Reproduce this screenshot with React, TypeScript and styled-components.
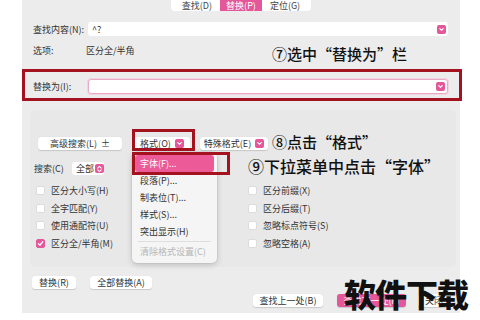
import React from "react";
import styled, { createGlobalStyle } from "styled-components";

const GlobalStyle = createGlobalStyle`
  html, body {
    margin: 0;
    padding: 0;
    background: #ffffff;
  }
  body {
    font-family: "Noto Sans CJK SC", "Noto Sans", sans-serif;
  }
`;

const PINK = "#e4579a";
const RED = "#a3121e";

const Page = styled.div`
  position: relative;
  width: 480px;
  height: 320px;
  overflow: hidden;
  background: #fff;
`;

const Dialog = styled.div`
  margin-left: 22px;
  width: 438px;
  height: 313px;
  background: #ececec;
  display: flex;
  flex-direction: column;
  font-size: 9px;
  color: #333;
`;

const TabBar = styled.div`
  align-self: center;
  display: flex;
  height: 11px;
  padding: 0 4px;
  background: #fff;
  border-radius: 0 0 4px 4px;
`;

const Tab = styled.div<{ $active?: boolean }>`
  padding: 0 6px;
  margin: 0 1px;
  height: 11px;
  line-height: 11px;
  font-size: 9px;
  color: ${(p) => (p.$active ? "#fff" : "#444")};
  background: ${(p) => (p.$active ? PINK : "transparent")};
`;

const Row = styled.div<{ $mt: number; $h: number }>`
  display: flex;
  align-items: center;
  margin-top: ${(p) => p.$mt}px;
  height: ${(p) => p.$h}px;
  padding: 0 12px 0 11px;
`;

const Label = styled.div<{ $w: number }>`
  width: ${(p) => p.$w}px;
  flex: none;
  white-space: nowrap;
`;

const Field = styled.div<{ $focus?: boolean }>`
  flex: 1;
  position: relative;
  height: ${(p) => (p.$focus ? 15 : 14)}px;
  box-sizing: border-box;
  background: #fff;
  border-radius: 3px;
  border: ${(p) => (p.$focus ? "1px solid #e9a9c6" : "none")};
  box-shadow: ${(p) => (p.$focus ? "0 0 0 1px #f3d3e2" : "none")};
  display: flex;
  align-items: center;
  padding-left: 4px;
`;

const PinkIcon = styled.span`
  width: 9px;
  height: 9px;
  border-radius: 2px;
  background: ${PINK};
  display: inline-flex;
  align-items: center;
  justify-content: center;
  flex: none;
`;

const FieldIcon = styled(PinkIcon)`
  position: absolute;
  right: 2px;
  top: 50%;
  margin-top: -4.5px;
`;

const Note = styled.div<{ $size?: number; $ml?: number }>`
  font-size: ${(p) => p.$size ?? 15}px;
  line-height: ${(p) => (p.$size ?? 15) + 2}px;
  margin-left: ${(p) => p.$ml ?? 0}px;
  font-weight: 500;
  color: #111;
  white-space: nowrap;
`;

const OptionRow = styled.div`
  display: flex;
  align-items: flex-start;
  height: 17px;
  margin-top: 9px;
  padding-left: 11px;
`;

const OptionText = styled.div<{ $w: number }>`
  width: ${(p) => p.$w}px;
  line-height: 12px;
  flex: none;
`;

const RedFrame = styled.div`
  margin-top: 7px;
  width: 440px;
  height: 32px;
  box-sizing: border-box;
  border: 3px solid ${RED};
  display: flex;
  align-items: center;
  padding: 2px 11px 0 8px;
`;

const Group = styled.div`
  margin: 9px 0 0 8px;
  width: 426px;
  height: 157px;
  background: #e8e8e8;
  border-radius: 5px;
  display: flex;
  flex-direction: column;
`;

const ButtonRow = styled.div`
  display: flex;
  align-items: flex-end;
  height: 21px;
  margin-top: 19px;
  padding-left: 8px;
`;

const Button = styled.div<{ $w: number; $ml?: number; $pink?: boolean }>`
  width: ${(p) => p.$w}px;
  margin-left: ${(p) => p.$ml ?? 0}px;
  height: 13px;
  box-sizing: border-box;
  border-radius: 3px;
  background: ${(p) => (p.$pink ? PINK : "#fff")};
  color: ${(p) => (p.$pink ? "#fff" : "#333")};
  box-shadow: 0 0.5px 1px rgba(0, 0, 0, 0.15);
  display: flex;
  align-items: center;
  justify-content: center;
  gap: 4px;
  font-size: 9px;
  line-height: 13px;
  white-space: nowrap;
  flex: none;
`;

const SearchRow = styled.div`
  display: flex;
  align-items: flex-end;
  height: 18px;
  margin-top: 7px;
  padding-left: 4px;
`;

const Select = styled.div`
  width: 32px;
  height: 13px;
  margin-left: 6px;
  box-sizing: border-box;
  background: #fff;
  border-radius: 3px;
  display: flex;
  align-items: center;
  justify-content: space-between;
  padding: 0 0 0 4px;
  white-space: nowrap;
  flex: none;
`;

const Checks = styled.div`
  display: grid;
  grid-template-columns: 212px 1fr;
  grid-auto-rows: 17.5px;
  margin-top: 7px;
  padding-left: 6px;
`;

const CheckItem = styled.div`
  display: flex;
  align-items: center;
  gap: 6px;
  white-space: nowrap;
`;

const Box = styled.span<{ $on?: boolean }>`
  width: 9px;
  height: 9px;
  border-radius: 2px;
  box-sizing: border-box;
  background: ${(p) => (p.$on ? PINK : "#fff")};
  border: 0.5px solid ${(p) => (p.$on ? PINK : "#dcdcdc")};
  display: inline-flex;
  align-items: center;
  justify-content: center;
  flex: none;
`;

const BottomRow = styled.div<{ $mt: number; $end?: boolean }>`
  display: flex;
  margin-top: ${(p) => p.$mt}px;
  justify-content: ${(p) => (p.$end ? "flex-end" : "flex-start")};
  padding: ${(p) => (p.$end ? "0 10px 0 0" : "0 0 0 10px")};
`;

const Menu = styled.div`
  position: absolute;
  left: 132px;
  top: 152px;
  width: 85px;
  height: 111px;
  box-sizing: border-box;
  padding: 3px;
  background: #f5f5f5;
  border-radius: 5px;
  box-shadow: 0 2px 6px rgba(0, 0, 0, 0.18), 0 0 0 0.5px rgba(0, 0, 0, 0.08);
  font-size: 9px;
  color: #333;
`;

const MenuItem = styled.div<{ $active?: boolean; $disabled?: boolean }>`
  height: 17px;
  line-height: 17px;
  padding-left: 5px;
  border-radius: 3px;
  background: ${(p) => (p.$active ? "#ec5a97" : "transparent")};
  color: ${(p) => (p.$active ? "#fff" : p.$disabled ? "#b5b5b5" : "#333")};
  white-space: nowrap;
`;

const MenuSep = styled.div`
  height: 1px;
  margin: 1px 3px 1px;
  background: #dedede;
`;

const Highlight = styled.div<{ $x: number; $y: number; $w: number; $h: number }>`
  position: absolute;
  left: ${(p) => p.$x}px;
  top: ${(p) => p.$y}px;
  width: ${(p) => p.$w}px;
  height: ${(p) => p.$h}px;
  box-sizing: border-box;
  border: 3px solid ${RED};
`;

const Watermark = styled.div`
  position: absolute;
  left: 344px;
  top: 273px;
  font-size: 32px;
  line-height: 40px;
  font-weight: 900;
  color: #111;
  letter-spacing: -1px;
  white-space: nowrap;
`;

const Chevron = () => (
  <svg width="7" height="7" viewBox="0 0 8 8">
    <path d="M2 3 L4 5 L6 3" stroke="#fff" strokeWidth="1.3" fill="none" strokeLinecap="round" strokeLinejoin="round" />
  </svg>
);

const UpDown = () => (
  <svg width="7" height="8" viewBox="0 0 8 9">
    <path d="M2 3.5 L4 1.5 L6 3.5 M2 5.5 L4 7.5 L6 5.5" stroke="#fff" strokeWidth="1.2" fill="none" strokeLinecap="round" strokeLinejoin="round" />
  </svg>
);

const Tick = () => (
  <svg width="7" height="7" viewBox="0 0 8 8">
    <path d="M1.5 4.2 L3.3 6 L6.6 2" stroke="#fff" strokeWidth="1.4" fill="none" strokeLinecap="round" strokeLinejoin="round" />
  </svg>
);

const leftChecks = [
  { t: "区分大小写(H)" },
  { t: "全字匹配(Y)" },
  { t: "使用通配符(U)" },
  { t: "区分全/半角(M)", on: true },
];
const rightChecks = ["区分前缀(X)", "区分后缀(T)", "忽略标点符号(S)", "忽略空格(A)"];

export default function App() {
  const cells: React.ReactNode[] = [];
  leftChecks.forEach((c, i) => {
    cells.push(
      <CheckItem key={"l" + i}>
        <Box $on={c.on}>{c.on && <Tick />}</Box>
        {c.t}
      </CheckItem>
    );
    cells.push(
      <CheckItem key={"r" + i}>
        <Box />
        {rightChecks[i]}
      </CheckItem>
    );
  });

  return (
    <Page>
      <GlobalStyle />
      <Dialog>
        <TabBar>
          <Tab>查找(D)</Tab>
          <Tab $active>替换(P)</Tab>
          <Tab>定位(G)</Tab>
        </TabBar>

        <Row $mt={11} $h={14}>
          <Label $w={55}>查找内容(N):</Label>
          <Field>
            ^?
            <FieldIcon>
              <Chevron />
            </FieldIcon>
          </Field>
        </Row>

        <OptionRow>
          <OptionText $w={53}>选项:</OptionText>
          <OptionText $w={186}>区分全/半角</OptionText>
          <Note>⑦选中“替换为”栏</Note>
        </OptionRow>

        <RedFrame>
          <Label $w={55}>替换为(I):</Label>
          <Field $focus>
            <FieldIcon>
              <Chevron />
            </FieldIcon>
          </Field>
        </RedFrame>

        <Group>
          <ButtonRow>
            <Button $w={84}>高级搜索(L)&nbsp;&nbsp;±</Button>
            <Button $w={56} $ml={12}>
              格式(O)
              <PinkIcon>
                <Chevron />
              </PinkIcon>
            </Button>
            <Button $w={68} $ml={10}>
              特殊格式(E)
              <PinkIcon>
                <Chevron />
              </PinkIcon>
            </Button>
            <Note $size={15} $ml={4}>
              ⑧点击“格式”
            </Note>
          </ButtonRow>

          <SearchRow>
            <Label $w={32}>搜索(C)</Label>
            <Select>
              全部
              <PinkIcon>
                <UpDown />
              </PinkIcon>
            </Select>
            <Note $size={16} $ml={144}>
              ⑨下拉菜单中点击“字体”
            </Note>
          </SearchRow>

          <Checks>{cells}</Checks>
        </Group>

        <BottomRow $mt={9}>
          <Button $w={44}>替换(R)</Button>
          <Button $w={62} $ml={14}>
            全部替换(A)
          </Button>
        </BottomRow>

        <BottomRow $mt={5} $end>
          <Button $w={70}>查找上一处(B)</Button>
          <Button $w={69} $ml={14} $pink>
            查找下一处(F)
          </Button>
          <Button $w={32} $ml={12}>
            关闭
          </Button>
        </BottomRow>
      </Dialog>

      <Menu>
        <MenuItem $active>字体(F)...</MenuItem>
        <MenuItem>段落(P)...</MenuItem>
        <MenuItem>制表位(T)...</MenuItem>
        <MenuItem>样式(S)...</MenuItem>
        <MenuItem>突出显示(H)</MenuItem>
        <MenuSep />
        <MenuItem $disabled>清除格式设置(C)</MenuItem>
      </Menu>

      <Highlight $x={132} $y={129} $w={63} $h={22} />
      <Highlight $x={132} $y={152} $w={98} $h={23} />

      <Watermark>软件下载</Watermark>
    </Page>
  );
}
